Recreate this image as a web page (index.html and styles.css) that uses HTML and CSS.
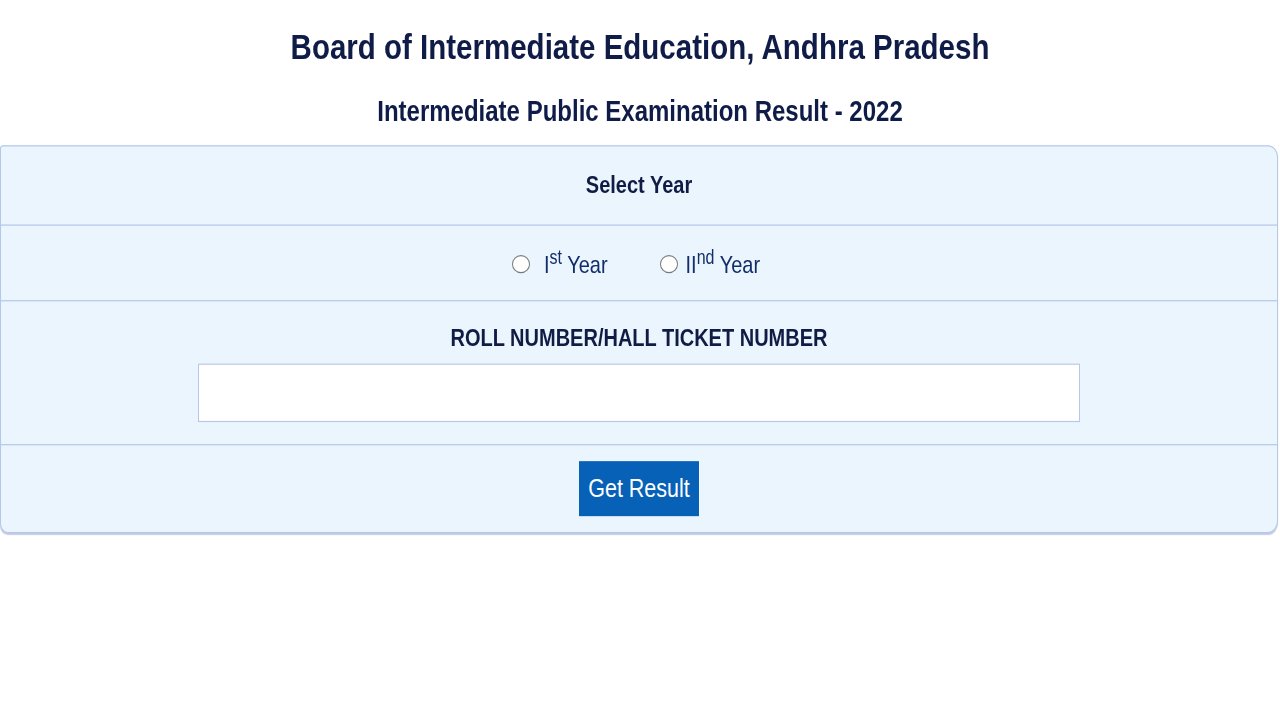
FILE: index.html
```html
<!DOCTYPE html>
<html lang="en">
<head>
<meta charset="utf-8">
<title>Board of Intermediate Education, Andhra Pradesh</title>
<link rel="stylesheet" href="styles.css">
</head>
<body>
<div class="page">
  <h1 class="title">Board of Intermediate Education, Andhra Pradesh</h1>
  <h2 class="subtitle">Intermediate Public Examination Result - 2022</h2>
  <form class="card">
    <div class="row row-head">Select Year</div>
    <div class="row row-radios">
      <label class="opt opt-1"><input type="radio" name="year" class="radio"><span class="opt-text">I<sup>st</sup> Year</span></label>
      <label class="opt opt-2"><input type="radio" name="year" class="radio"><span class="opt-text">II<sup>nd</sup> Year</span></label>
    </div>
    <div class="row row-roll">
      <div class="roll-label">ROLL NUMBER/HALL TICKET NUMBER</div>
      <input type="text" class="roll-input">
    </div>
    <div class="row row-submit">
      <button type="button" class="btn">Get Result</button>
    </div>
  </form>
</div>
</body>
</html>
```

FILE: styles.css
```css
html, body {
  margin: 0;
  padding: 0;
  background: #ffffff;
}

body {
  min-height: 720px;
}

.page {
  width: 1280px;
  transform: scaleY(1.22);
  transform-origin: top left;
  font-family: "Liberation Sans", Arial, sans-serif;
  color: #101c4c;
  padding-top: 21px;
}

.title {
  margin: 0;
  font-size: 29.5px;
  line-height: 34px;
  font-weight: bold;
  text-align: center;
  color: #101c48;
}

.subtitle {
  margin: 22px 0 0;
  font-size: 24px;
  line-height: 28px;
  font-weight: bold;
  text-align: center;
  color: #101c48;
}

.card {
  margin: 14px 0 0;
  width: 1276px;
  background: #eaf5fe;
  border: 1px solid #b7c7ea;
  border-radius: 3px 10px 10px 8px;
  box-shadow: 0 1px 1px rgba(120, 140, 200, 0.45);
}

.row {
  display: flex;
  flex-direction: column;
  align-items: center;
  border-bottom: 1px solid #b7c7ea;
}

.row:last-child {
  border-bottom: none;
}

.row-head {
  padding: 19px 0 21px;
  font-size: 20px;
  line-height: 24px;
  font-weight: bold;
  color: #111c45;
}

.row-radios {
  flex-direction: row;
  justify-content: center;
  padding: 19px 0 17px;
  font-size: 20px;
  line-height: 23px;
  color: #122d6a;
}

.opt {
  display: flex;
  align-items: center;
}

.opt-2 {
  margin-left: 52px;
  margin-right: 6px;
}

.radio {
  appearance: none;
  -webkit-appearance: none;
  width: 18px;
  height: 15px;
  margin: 0;
  border: 1.5px solid #7a7a7a;
  border-radius: 50%;
  background: #ffffff;
  box-sizing: border-box;
}

.opt-1 .radio {
  margin-right: 14px;
}

.opt-2 .radio {
  margin-right: 8px;
}

.opt-text {
  padding-top: 2px;
}

.opt-text sup {
  font-size: 16px;
  line-height: 0;
  vertical-align: 8px;
}

.row-roll {
  padding: 19px 0 18px;
}

.roll-label {
  font-size: 20px;
  line-height: 23px;
  font-weight: bold;
  color: #111c45;
}

.roll-input {
  margin-top: 9px;
  width: 882px;
  height: 48px;
  box-sizing: border-box;
  border: 1px solid #b7c7ea;
  background: #ffffff;
  outline: none;
}

.row-submit {
  padding: 13px 0 13px;
}

.btn {
  width: 120px;
  height: 45px;
  border: none;
  background: #0661b7;
  color: #ffffff;
  font-family: "Liberation Sans", Arial, sans-serif;
  font-size: 21.5px;
  padding: 0;
  cursor: pointer;
}
```
